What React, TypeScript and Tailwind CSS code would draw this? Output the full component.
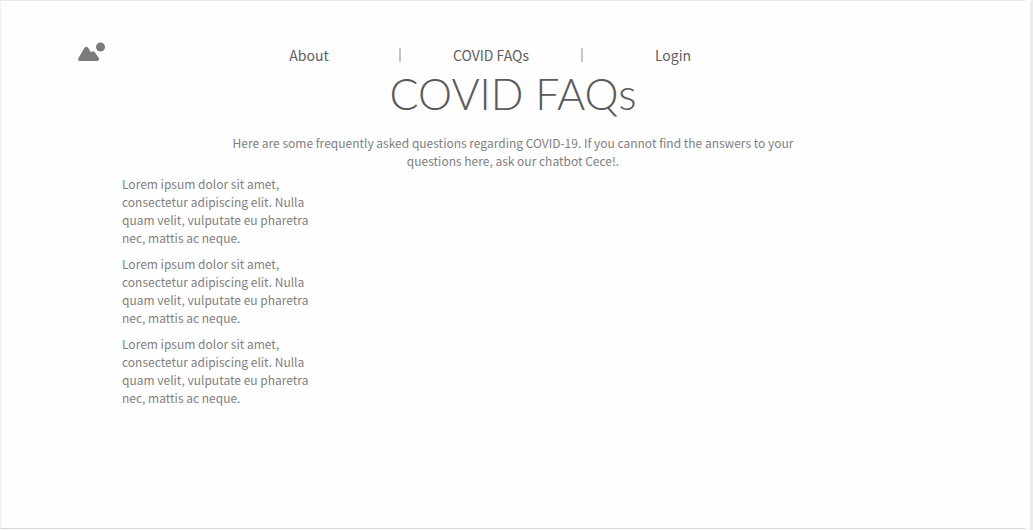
const links = [
  { label: "About", href: "#about" },
  { label: "COVID FAQs", href: "#faqs" },
  { label: "Login", href: "#login" },
];

const answer =
  "Lorem ipsum dolor sit amet, consectetur adipiscing elit. Nulla quam velit, vulputate eu pharetra nec, mattis ac neque.";

function Logo() {
  return (
    <svg viewBox="0 0 28 20" className="h-5 w-7" fill="#7b7b7b" aria-hidden="true">
      <circle cx="22.5" cy="6" r="4.5" />
      <path d="M.2 17.4 5.6 8.2Q6.8 5.8 8.2 5.8Q9.8 5.8 10.8 7.8L12.8 11.2Q14.8 9.3 16.8 11.2L20.8 17Q21.8 19.6 19.4 19.9H1.8Q-.4 19.8.2 17.4Z" />
    </svg>
  );
}

export default function App() {
  return (
    <div className="flex min-h-screen border-r-3 border-[#ececec] bg-[#fefefe] pb-px pr-1 font-['Noto_Sans_CJK_SC','Noto_Sans',sans-serif]">
      <div className="flex-1 border border-t-[#e8e8e8] border-r-transparent border-b-[#d6d6d6] border-l-[#f0f0f0]">
        <header className="flex items-start pt-10 pl-[77px]">
          <a href="#home" aria-label="Home">
            <Logo />
          </a>
          <nav className="ml-[113px] flex h-7 items-center text-sm text-[#5f5f5f]">
            {links.map((link, i) => (
              <div key={link.href} className="flex items-center">
                {i > 0 && <span className="h-3.5 w-0.5 bg-[#c8c8c8]" />}
                <a href={link.href} className="w-45 text-center">
                  {link.label}
                </a>
              </div>
            ))}
          </nav>
        </header>
        <main>
          <h1 className="text-center font-['Lato',sans-serif] text-[43px] leading-[50px] font-light text-[#5a5a5a]">
            COVID FAQs
          </h1>
          <p className="mx-auto mt-[15px] max-w-[584px] text-center text-xs leading-[18px] text-[#808080]">
            Here are some frequently asked questions regarding COVID-19. If you cannot find the answers to your questions
            here, ask our chatbot Cece!.
          </p>
          <section className="mt-[5px] ml-[121px] flex w-50 flex-col gap-2 text-xs leading-[18px] text-[#808080]">
            {[0, 1, 2].map((n) => (
              <p key={n}>{answer}</p>
            ))}
          </section>
        </main>
      </div>
    </div>
  );
}
